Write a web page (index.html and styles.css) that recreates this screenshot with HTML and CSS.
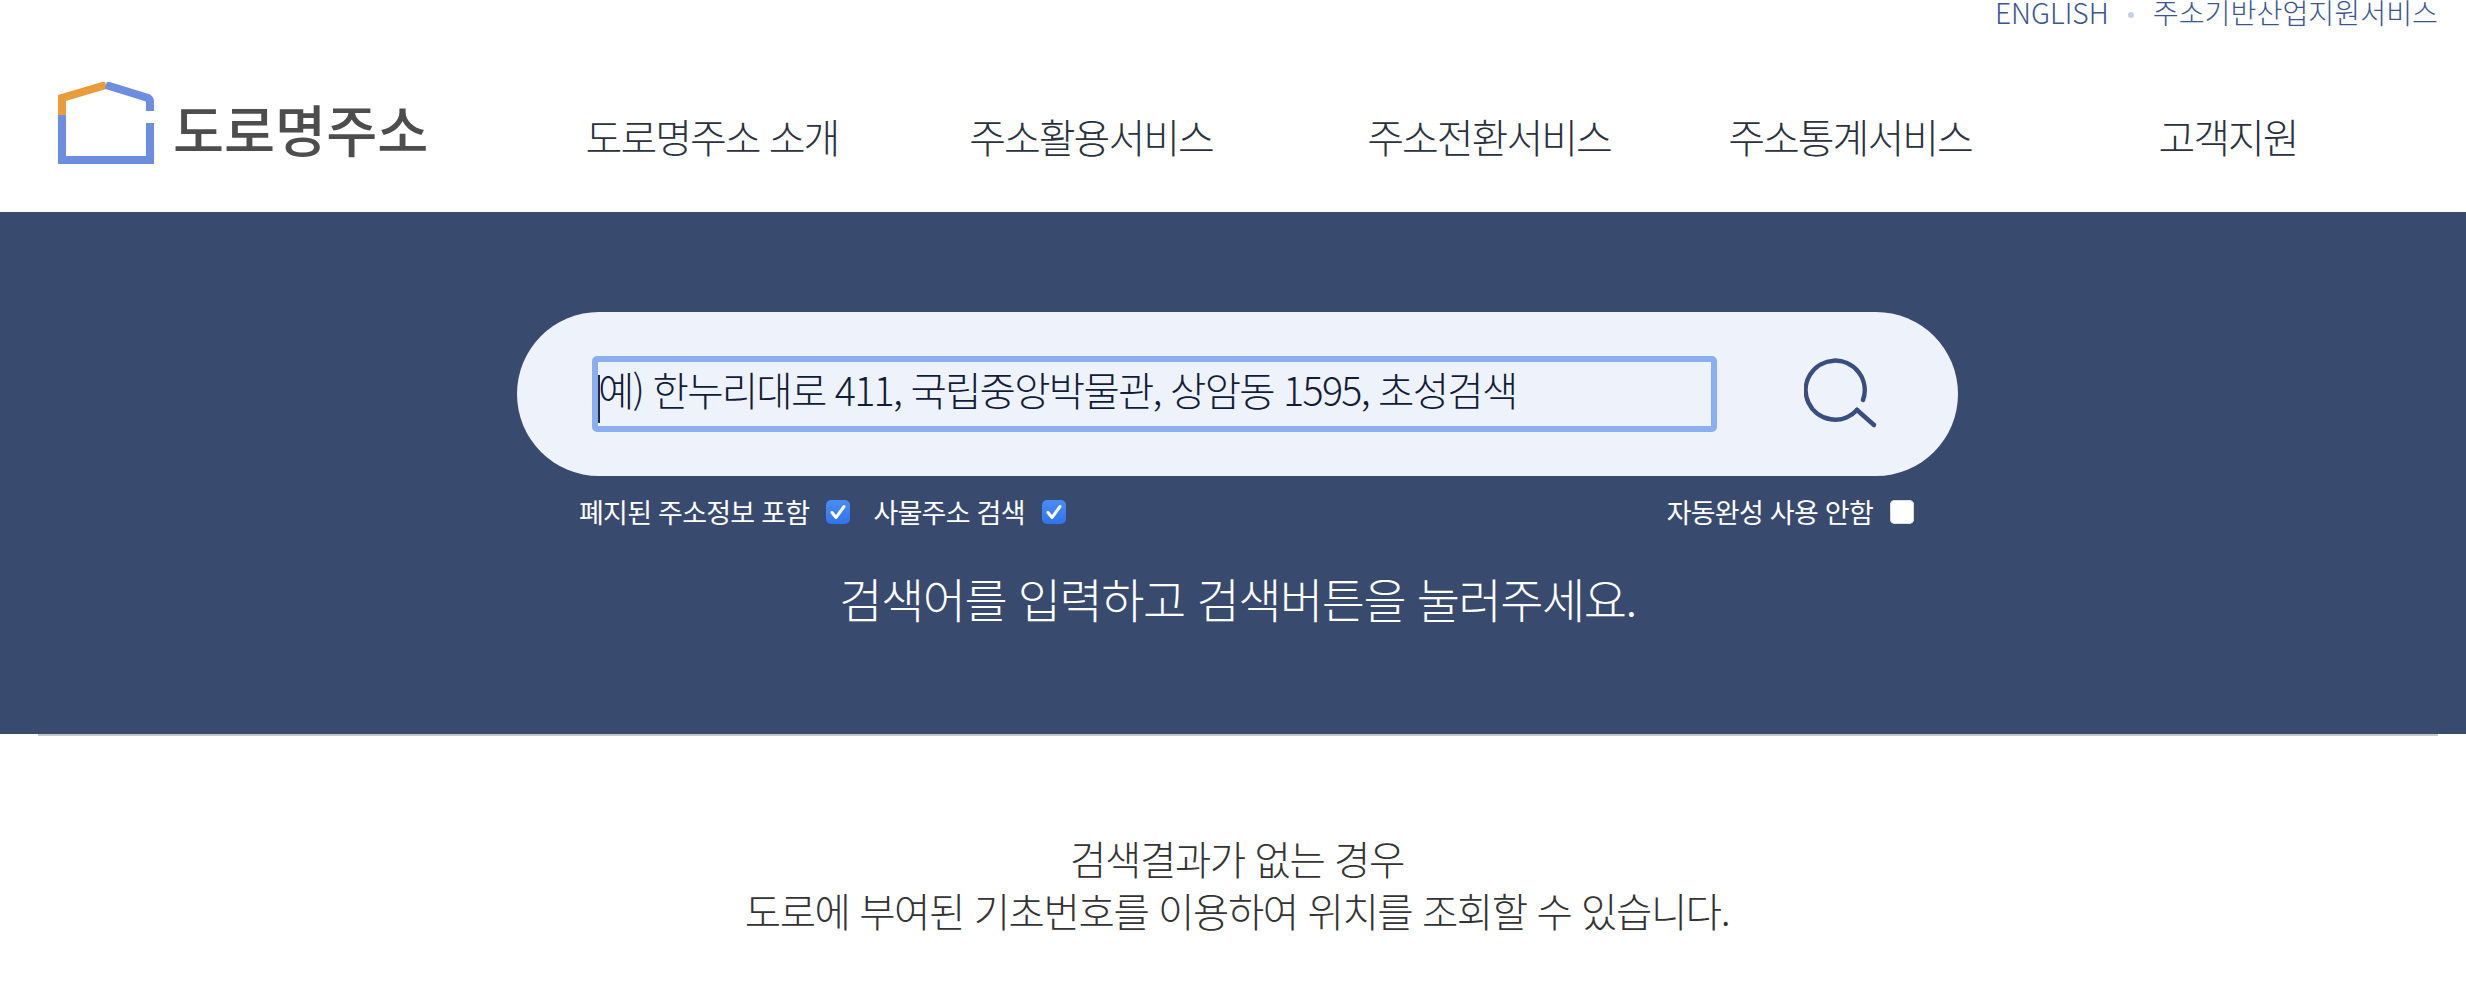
FILE: index.html
```html
<!DOCTYPE html>
<html lang="ko">
<head>
<meta charset="utf-8">
<title>도로명주소</title>
<link rel="stylesheet" href="styles.css">
</head>
<body>
<header class="site-header">
  <div class="util">
    <a class="util-link">ENGLISH</a>
    <span class="util-dot"></span>
    <a class="util-link">주소기반산업지원서비스</a>
  </div>
  <div class="main-row">
    <a class="logo">
      <svg class="logo-mark" width="96" height="82" viewBox="0 0 96 82">
        <path d="M4 33 V16 L48 3" fill="none" stroke="#e89c3c" stroke-width="8"/>
        <path d="M48 3 L90 16 Q92 17 92 20 V29 M92 41 V78 H4 V33" fill="none" stroke="#6d8de0" stroke-width="8"/>
      </svg>
      <span class="logo-text">도로명주소</span>
    </a>
    <nav class="gnb">
      <a>도로명주소 소개</a>
      <a>주소활용서비스</a>
      <a>주소전환서비스</a>
      <a>주소통계서비스</a>
      <a>고객지원</a>
    </nav>
  </div>
</header>
<section class="hero">
  <div class="search-pill">
    <div class="search-field"><span class="caret"></span><span class="placeholder">예) 한누리대로 411, 국립중앙박물관, 상암동 1595, 초성검색</span></div>
    <svg class="search-icon" width="76" height="76" viewBox="0 0 76 76">
      <path d="M59 44 A29.5 29.5 0 1 0 53 54" fill="none" stroke="#3a4d80" stroke-width="4.5" stroke-linecap="round"/>
      <path d="M53 54 L70 69" fill="none" stroke="#3a4d80" stroke-width="4.5" stroke-linecap="round"/>
    </svg>
  </div>
  <div class="options">
    <div class="opt-group">
      <label class="opt">폐지된 주소정보 포함<span class="box on"><svg width="24" height="24" viewBox="0 0 24 24"><path d="M6 12.5 L10 17.5 L18 6.5" fill="none" stroke="#fff" stroke-width="3" stroke-linecap="round" stroke-linejoin="round"/></svg></span></label>
      <label class="opt">사물주소 검색<span class="box on"><svg width="24" height="24" viewBox="0 0 24 24"><path d="M6 12.5 L10 17.5 L18 6.5" fill="none" stroke="#fff" stroke-width="3" stroke-linecap="round" stroke-linejoin="round"/></svg></span></label>
    </div>
    <label class="opt">자동완성 사용 안함<span class="box off"></span></label>
  </div>
  <p class="hero-msg">검색어를 입력하고 검색버튼을 눌러주세요.</p>
</section>
<div class="rule"></div>
<section class="notice">
  <p>검색결과가 없는 경우</p>
  <p>도로에 부여된 기초번호를 이용하여 위치를 조회할 수 있습니다.</p>
</section>
</body>
</html>
```
FILE: styles.css
```css
* { box-sizing: border-box; }
html, body { margin: 0; padding: 0; }
body {
  background: #fff;
  font-family: "Noto Sans CJK KR", "Noto Sans", sans-serif;
  font-weight: 300;
  color: #333;
  overflow: hidden;
}
p { margin: 0; }
.site-header { height: 212px; }
.util {
  display: flex;
  justify-content: flex-end;
  align-items: center;
  height: 24px;
  padding-right: 28px;
  color: #3a5592;
  font-size: 28.2px;
  line-height: 24px;
  gap: 19px;
}
.util-dot { width: 6px; height: 6px; margin-top: 6px; border-radius: 50%; background: #c5cfe6; }
.main-row {
  display: flex;
  height: 188px;
}
.logo { display: flex; width: 524px; padding: 58px 0 0 58px; gap: 19px; align-items: flex-start; }
.logo-mark { flex: none; }
.logo-text { font-size: 55.5px; line-height: 72px; margin-top: 10px; font-weight: 500; color: #4d4d4d; }
.gnb {
  display: grid;
  grid-template-columns: 376px 382px 414px 308px 448px;
  height: 188px;
  padding-top: 87px;
  font-size: 40px;
  letter-spacing: -2px;
  line-height: 50px;
  font-weight: 300;
  color: #2a323e;
  text-align: center;
}
.hero {
  height: 522px;
  background: #394a6f;
  padding: 100px 0 0 9px;
  color: #fff;
}
.search-pill {
  display: flex;
  align-items: center;
  width: 1441px;
  height: 164px;
  margin: 0 auto;
  padding: 0 0 0 75px;
  border-radius: 82px;
  background: #eef2fb;
}
.search-field {
  display: flex;
  align-items: center;
  position: relative;
  width: 1125px;
  height: 76px;
  padding-bottom: 12px;
  border: 6px solid #8aaef0;
  border-radius: 5px;
  font-size: 39.5px;
  letter-spacing: -1.75px;
  font-weight: 300;
  color: #111c38;
}
.caret { position: absolute; left: 0; top: 13px; width: 2px; height: 48px; background: #1d2b4a; }
.search-icon { flex: none; margin-left: 87px; }
.options {
  display: flex;
  justify-content: space-between;
  width: 1441px;
  margin: 24px auto 0;
  padding: 0 44px 0 62px;
  font-size: 27px;
  letter-spacing: -0.75px;
  font-weight: 400;
  line-height: 24px;
}
.opt-group { display: flex; gap: 23px; }
.opt { display: flex; align-items: center; gap: 17px; }
.box { flex: none; display: block; width: 24px; height: 24px; border-radius: 5px; }
.box svg { display: block; }
.box.on { background: linear-gradient(#4a8cf5, #2f74ea); }
.box.off { background: #fff; box-shadow: inset 0 0 0 1px #ddd; }
.hero-msg {
  margin-top: 44px;
  font-size: 47px;
  letter-spacing: -1.5px;
  line-height: 60px;
  text-align: center;
}
.rule { height: 2px; margin: 0 28px 0 38px; background: #c8c8c8; }
.notice {
  padding: 96px 0 0 8px;
  font-size: 39.5px;
  letter-spacing: -1.4px;
  line-height: 52px;
  text-align: center;
  color: #333;
}
```
